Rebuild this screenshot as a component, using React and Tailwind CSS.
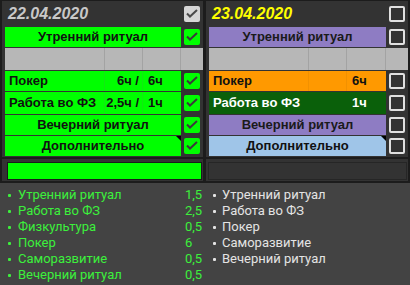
const left = {
  date: '22.04.2020',
  dateColor: 'text-[#c8c8c8]',
  dateChecked: true,
  rows: [
    { kind: 'center', label: 'Утренний ритуал', bg: 'bg-[#00ff00]', text: 'text-[#111]' },
    { kind: 'gray' },
    { kind: 'hours', label: 'Покер', h1: '6ч /', h2: '6ч', bg: 'bg-[#00ff00]', text: 'text-[#111]', line: 'border-[#12e812]' },
    { kind: 'hours', label: 'Работа во ФЗ', h1: '2,5ч /', h2: '1ч', bg: 'bg-[#00ff00]', text: 'text-[#111]', line: 'border-[#12e812]' },
    { kind: 'center', label: 'Вечерний ритуал', bg: 'bg-[#00ff00]', text: 'text-[#111]' },
    { kind: 'center', label: 'Дополнительно', bg: 'bg-[#00ff00]', text: 'text-[#111]', note: true },
  ],
  checked: true,
};

const right = {
  date: '23.04.2020',
  dateColor: 'text-[#ffff00]',
  dateChecked: false,
  rows: [
    { kind: 'center', label: 'Утренний ритуал', bg: 'bg-[#8e7cc3]', text: 'text-[#1a1a1a]' },
    { kind: 'gray' },
    { kind: 'hours', label: 'Покер', h1: '', h2: '6ч', bg: 'bg-[#ff9900]', text: 'text-[#111]', line: 'border-[#f29100]' },
    { kind: 'hours', label: 'Работа во ФЗ', h1: '', h2: '1ч', bg: 'bg-[#0a600a]', text: 'text-white', line: 'border-[#0a600a]' },
    { kind: 'center', label: 'Вечерний ритуал', bg: 'bg-[#8e7cc3]', text: 'text-[#1a1a1a]' },
    { kind: 'center', label: 'Дополнительно', bg: 'bg-[#9fc5e8]', text: 'text-[#111]', note: true },
  ],
  checked: false,
};

const doneList = [
  ['Утренний ритуал', '1,5'],
  ['Работа во ФЗ', '2,5'],
  ['Физкультура', '0,5'],
  ['Покер', '6'],
  ['Саморазвитие', '0,5'],
  ['Вечерний ритуал', '0,5'],
];

const planList = ['Утренний ритуал', 'Работа во ФЗ', 'Покер', 'Саморазвитие', 'Вечерний ритуал'];

function Check({ variant }) {
  if (variant === 'off') {
    return <div className="w-4 h-4 rounded-[2px] border-2 border-[#e0e0e0] bg-[#333]" />;
  }
  const box = variant === 'light' ? 'bg-[#d6d6d6]' : 'bg-[#00ff00]';
  const stroke = variant === 'light' ? '#4a4a4a' : '#3a3a3a';
  return (
    <div className={`w-4 h-4 rounded-[2px] ${box}`}>
      <svg width="16" height="16" viewBox="0 0 16 16">
        <polyline points="3,7.5 6,10.5 13,4" fill="none" stroke={stroke} strokeWidth="2" />
      </svg>
    </div>
  );
}

function Row({ row, checked }) {
  if (row.kind === 'gray') {
    return (
      <div className="flex h-[22px] bg-[#b7b7b7]">
        <div className="w-[100px] border-r border-[#a3a3a3]" />
        <div className="w-[38px] border-r border-[#a3a3a3]" />
        <div className="flex-1 border-r border-[#a3a3a3]" />
        <div className="w-[22px]" />
      </div>
    );
  }
  const h = row.kind === 'hours' && row.label.startsWith('Работа') ? 'h-[22px]' : 'h-[20px]';
  return (
    <div className={`flex ${h}`}>
      <div className={`relative flex-1 flex items-center font-bold text-[13px] ${row.bg} ${row.text}`}>
        {row.kind === 'center' ? (
          <div className="w-full text-center">{row.label}</div>
        ) : (
          <>
            <div className={`w-[100px] h-full flex items-center pl-1 border-r ${row.line}`}>{row.label}</div>
            <div className={`w-[38px] h-full flex items-center justify-end pr-[3px] border-r ${row.line}`}>{row.h1}</div>
            <div className="flex-1 h-full flex items-center pl-[5px]">{row.h2}</div>
          </>
        )}
        {row.note && (
          <div className="absolute top-0 right-0 w-0 h-0 border-t-[5px] border-l-[5px] border-t-black border-l-transparent" />
        )}
      </div>
      <div className="w-[22px] flex items-center justify-center">
        <Check variant={checked ? 'on' : 'off'} />
      </div>
    </div>
  );
}

function Panel({ data, width }) {
  return (
    <div className={`${width} bg-[#333] pl-[3px] pb-px flex flex-col gap-px`}>
      <div className="flex h-[25px]">
        <div className={`flex-1 flex items-center pl-[3px] italic font-bold text-[16px] ${data.dateColor}`}>
          {data.date}
        </div>
        <div className="w-[22px] flex items-center justify-center">
          <Check variant={data.dateChecked ? 'light' : 'off'} />
        </div>
      </div>
      {data.rows.map((row, i) => (
        <Row key={i} row={row} checked={data.checked} />
      ))}
    </div>
  );
}

export default function App() {
  return (
    <div className="w-[410px] h-[285px] bg-[#434343] overflow-hidden" style={{ fontFamily: '"Liberation Sans", Arial, sans-serif' }}>
      <div className="bg-[#1c1c1c] pt-px px-[2px] pb-[2px]">
        <div className="flex gap-[3px]">
          <Panel data={left} width="w-[201px]" />
          <Panel data={right} width="w-[202px]" />
        </div>
        <div className="flex gap-[3px] mt-[2px]">
          <div className="w-[201px] h-[22px] bg-[#333] pl-[5px] pr-px pt-[3px] pb-px">
            <div className="h-full border border-[#1a1a1a] bg-[#00ff00]" />
          </div>
          <div className="w-[202px] h-[22px] bg-[#333] pl-[2px] pr-px pt-[3px] pb-px">
            <div className="h-full border border-[#262626] bg-[#333]" />
          </div>
        </div>
      </div>
      <div className="flex pt-[4px] text-[13px] leading-4" style={{ fontFamily: 'Roboto, sans-serif' }}>
        <div className="w-[205px] pl-[8px] text-[#3cf03c]">
          {doneList.map(([name, val]) => (
            <div key={name} className="flex items-center">
              <div className="w-[10px]"><div className="w-[3px] h-[3px] rounded-[1px] bg-[#3cf03c]" /></div>
              <div className="w-[167px]">{name}</div>
              <div>{val}</div>
            </div>
          ))}
        </div>
        <div className="flex-1 pl-[8px] text-[#e4e4e4]">
          {planList.map((name) => (
            <div key={name} className="flex items-center">
              <div className="w-[9px]"><div className="w-[3px] h-[3px] rounded-[1px] bg-[#e4e4e4]" /></div>
              <div>{name}</div>
            </div>
          ))}
        </div>
      </div>
    </div>
  );
}
